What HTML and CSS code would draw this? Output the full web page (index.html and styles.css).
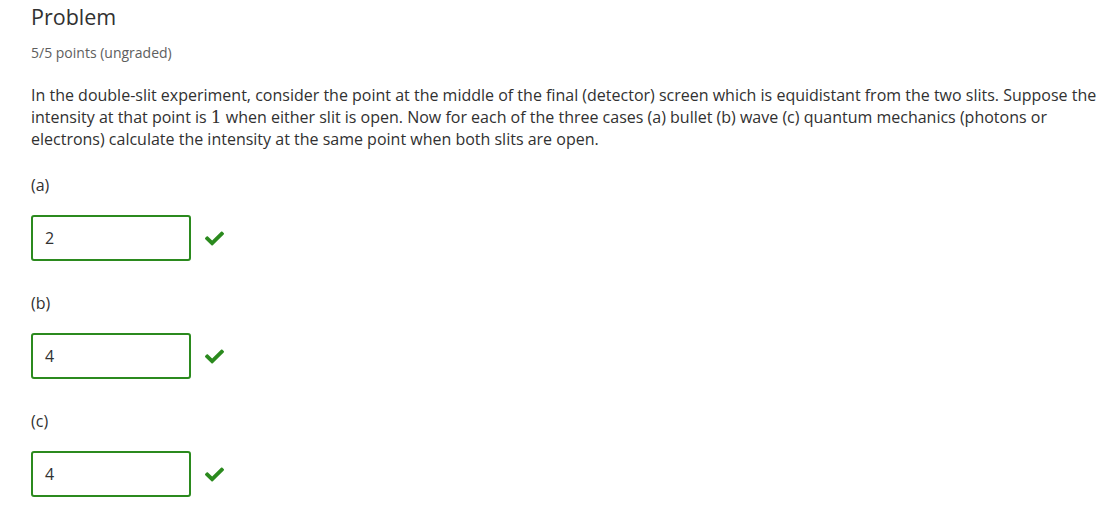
FILE: index.html
```html
<!DOCTYPE html>
<html>
<head>
<meta charset="utf-8">
<link rel="stylesheet" href="styles.css">
</head>
<body>
<div class="problem">
  <h3 class="title">Problem</h3>
  <div class="points">5/5 points (ungraded)</div>
  <p class="text">In the double-slit experiment, consider the point at the middle of the final (detector) screen which is equidistant from the two slits. Suppose the intensity at that point is <span class="math">1</span> when either slit is open. Now for each of the three cases (a) bullet (b) wave (c) quantum mechanics (photons or electrons) calculate the intensity at the same point when both slits are open.</p>

  <div class="part">
    <div class="label">(a)</div>
    <div class="answer">
      <div class="input">2</div>
      <svg class="check" viewBox="0 0 512 512"><path d="M173.898 439.404l-166.4-166.4c-9.997-9.997-9.997-26.206 0-36.204l36.203-36.204c9.997-9.998 26.207-9.998 36.204 0L192 312.69 432.095 72.596c9.997-9.997 26.207-9.997 36.204 0l36.203 36.204c9.997 9.997 9.997 26.206 0 36.204l-294.4 294.401c-9.998 9.997-26.207 9.997-36.204-.001z"/></svg>
    </div>
  </div>

  <div class="part">
    <div class="label">(b)</div>
    <div class="answer">
      <div class="input">4</div>
      <svg class="check" viewBox="0 0 512 512"><path d="M173.898 439.404l-166.4-166.4c-9.997-9.997-9.997-26.206 0-36.204l36.203-36.204c9.997-9.998 26.207-9.998 36.204 0L192 312.69 432.095 72.596c9.997-9.997 26.207-9.997 36.204 0l36.203 36.204c9.997 9.997 9.997 26.206 0 36.204l-294.4 294.401c-9.998 9.997-26.207 9.997-36.204-.001z"/></svg>
    </div>
  </div>

  <div class="part">
    <div class="label">(c)</div>
    <div class="answer">
      <div class="input">4</div>
      <svg class="check" viewBox="0 0 512 512"><path d="M173.898 439.404l-166.4-166.4c-9.997-9.997-9.997-26.206 0-36.204l36.203-36.204c9.997-9.998 26.207-9.998 36.204 0L192 312.69 432.095 72.596c9.997-9.997 26.207-9.997 36.204 0l36.203 36.204c9.997 9.997 9.997 26.206 0 36.204l-294.4 294.401c-9.998 9.997-26.207 9.997-36.204-.001z"/></svg>
    </div>
  </div>
</div>
</body>
</html>
```

FILE: styles.css
```css
html, body {
  margin: 0;
  padding: 0;
  background: #fff;
}
body {
  font-family: "Open Sans", "Liberation Sans", sans-serif;
  color: #313131;
}
.problem {
  padding: 3px 0 0 31px;
  width: 1072px;
}
.title {
  margin: 0;
  font-size: 21.5px;
  font-weight: 400;
  line-height: 28px;
  color: #313131;
}
.points {
  margin-top: 12px;
  font-size: 14px;
  line-height: 20px;
  color: #5e5e5e;
}
.text {
  margin: 21px 0 0 0;
  font-size: 16px;
  line-height: 22px;
}
.math {
  font-family: "DejaVu Serif", "Liberation Serif", serif;
  font-size: 17px;
  line-height: 1;
}
.part {
  margin-top: 24px;
}
.part + .part {
  margin-top: 31px;
}
.label {
  font-size: 16px;
  line-height: 22px;
}
.answer {
  margin-top: 19px;
  display: flex;
  align-items: center;
}
.input {
  box-sizing: border-box;
  width: 160px;
  height: 46px;
  border: 2px solid #2b8a1e;
  border-radius: 3px;
  padding: 0 12px;
  display: flex;
  align-items: center;
  font-size: 16px;
  color: #313131;
}
.check {
  width: 19px;
  height: 19px;
  margin-left: 14px;
  fill: #2b8a1e;
}
```
